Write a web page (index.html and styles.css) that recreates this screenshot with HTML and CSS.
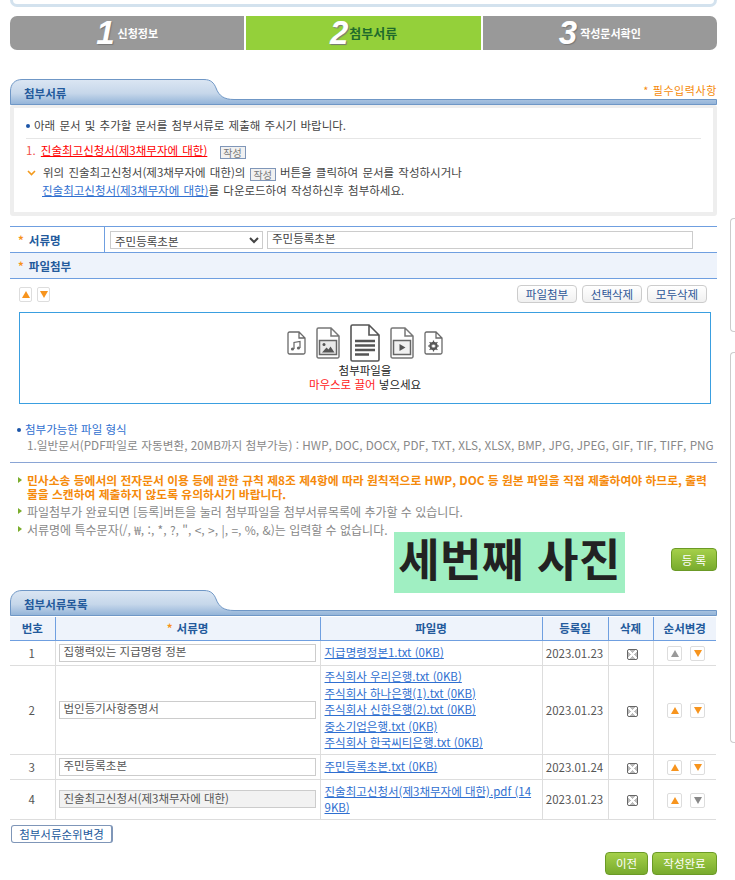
FILE: index.html
```html
<!DOCTYPE html>
<html lang="ko">
<head>
<meta charset="utf-8">
<title>첨부서류</title>
<link rel="stylesheet" href="styles.css">
</head>
<body>
<div class="side side-a"></div>
<div class="side side-b"></div>
<main class="page">
  <div class="top-card"></div>
  <ol class="steps">
    <li class="step"><span class="num">1</span><span class="lbl">신청정보</span></li>
    <li class="step on"><span class="num">2</span><span class="lbl">첨부서류</span></li>
    <li class="step"><span class="num">3</span><span class="lbl">작성문서확인</span></li>
  </ol>

  <div class="sec-head first">
    <svg class="tab" width="707" height="26" viewBox="0 0 707 26"><defs><linearGradient id="g1" x1="0" y1="0" x2="0" y2="1"><stop offset="0" stop-color="#dbe6f3"/><stop offset=".55" stop-color="#c6d7ea"/><stop offset="1" stop-color="#92b3d8"/></linearGradient></defs><path d="M.5 25.5V12C.5 5 5 .5 12 .5H194C201 .5 204 4 206 9C209 17 214 20.500 224 20.500H706.500V25.500Z" fill="url(#g1)" stroke="#6f97c6"/></svg>
    <h2 class="sec-title">첨부서류</h2>
    <span class="req">* 필수입력사항</span>
  </div>
  <section class="guide">
    <p class="g-intro"><i class="dot"></i>아래 문서 및 추가할 문서를 첨부서류로 제출해 주시기 바랍니다.</p>
    <p class="g-doc">1. <a class="red" href="#">진술최고신청서(제3채무자에 대한)</a> <span class="mini g-mini1">작성</span></p>
    <p class="g-how"><svg class="chev" width="9" height="6" viewBox="0 0 9 6"><path d="M1 1l3.500 3.500L8 1" fill="none" stroke="#f39a1d" stroke-width="1.600"/></svg>위의 진술최고신청서(제3채무자에 대한)의 <span class="mini">작성</span> 버튼을 클릭하여 문서를 작성하시거나</p>
    <p class="g-how2"><a href="#">진술최고신청서(제3채무자에 대한)</a>를 다운로드하여 작성하신후 첨부하세요.</p>
  </section>

  <div class="f-row f-name">
    <div class="f-label"><b class="star">*</b>서류명</div>
    <div class="f-val">
      <select class="sel"><option>주민등록초본</option></select>
      <input class="inp" value="주민등록초본">
    </div>
  </div>
  <div class="f-row f-file"><div class="f-label"><b class="star">*</b>파일첨부</div></div>

  <div class="tools">
    <div class="arrows">
      <span class="arr"><i class="up"></i></span>
      <span class="arr"><i class="down"></i></span>
    </div>
    <div class="t-btns">
      <button class="tbtn">파일첨부</button>
      <button class="tbtn">선택삭제</button>
      <button class="tbtn">모두삭제</button>
    </div>
  </div>

  <div class="drop">
    <div class="icons">
      <svg width="19" height="24" viewBox="0 0 19 24"><path d="M1 2.500A1.500 1.500 0 0 1 2.500 1H12L18 7V21.500A1.500 1.500 0 0 1 16.500 23H2.500A1.500 1.500 0 0 1 1 21.500Z M12 1V7H18" fill="#fff" stroke="#6a6a6a" stroke-width="1.300"/><path d="M7 18V11.500L13 10.500V17" fill="none" stroke="#666" stroke-width="1.200"/><circle cx="5.500" cy="18" r="1.600" fill="#666"/><circle cx="11.500" cy="17" r="1.600" fill="#666"/></svg>
      <svg width="24" height="32" viewBox="0 0 24 32"><path d="M1 2.500A1.500 1.500 0 0 1 2.500 1H15L23 9V29.500A1.500 1.500 0 0 1 21.500 31H2.500A1.500 1.500 0 0 1 1 29.500Z M15 1V9H23" fill="#fff" stroke="#777" stroke-width="1.500"/><rect x="3.500" y="13.500" width="17" height="14" fill="#e9e9e9" stroke="#666" stroke-width="1.500"/><circle cx="8" cy="17.500" r="1.500" fill="#555"/><path d="M6 25.500l4.500-5 2 2 2-3 4 6Z" fill="#555"/></svg>
      <svg width="30" height="38" viewBox="0 0 30 38"><path d="M1 2.500A1.500 1.500 0 0 1 2.500 1H19L29 11V35.500A1.500 1.500 0 0 1 27.500 37H2.500A1.500 1.500 0 0 1 1 35.500Z M19 1V11H29" fill="#fff" stroke="#555" stroke-width="1.600"/><path d="M5 17H25M5 21.500H25M5 26H25M5 30.500H19" stroke="#555" stroke-width="2.400"/></svg>
      <svg width="24" height="32" viewBox="0 0 24 32"><path d="M1 2.500A1.500 1.500 0 0 1 2.500 1H15L23 9V29.500A1.500 1.500 0 0 1 21.500 31H2.500A1.500 1.500 0 0 1 1 29.500Z M15 1V9H23" fill="#fff" stroke="#777" stroke-width="1.500"/><rect x="3.500" y="13.500" width="17" height="14" fill="#f1f1f1" stroke="#666" stroke-width="1.500"/><path d="M9.500 17l6 3.500-6 3.500Z" fill="#555"/></svg>
      <svg width="19" height="24" viewBox="0 0 19 24"><path d="M1 2.500A1.500 1.500 0 0 1 2.500 1H12L18 7V21.500A1.500 1.500 0 0 1 16.500 23H2.500A1.500 1.500 0 0 1 1 21.500Z M12 1V7H18" fill="#fff" stroke="#6a6a6a" stroke-width="1.300"/><circle cx="9.500" cy="15" r="3.200" fill="none" stroke="#555" stroke-width="2"/><path d="M9.500 9.500v11M4 15h11M5.600 11.100l7.800 7.800M13.400 11.100l-7.800 7.800" stroke="#555" stroke-width="1.200"/><circle cx="9.500" cy="15" r="1.500" fill="#fff"/></svg>
    </div>
    <p class="d1">첨부파일을</p>
    <p class="d2"><span class="d-red">마우스로 끌어</span> 넣으세요</p>
  </div>

  <div class="formats">
    <p class="fmt-t"><i class="dot"></i>첨부가능한 파일 형식</p>
    <p class="fmt-l">1.일반문서(PDF파일로 자동변환, 20MB까지 첨부가능) : HWP, DOC, DOCX, PDF, TXT, XLS, XLSX, BMP, JPG, JPEG, GIF, TIF, TIFF, PNG</p>
  </div>

  <ul class="notes">
    <li class="warn">민사소송 등에서의 전자문서 이용 등에 관한 규칙 제8조 제4항에 따라 원칙적으로 HWP, DOC 등 원본 파일을 직접 제출하여야 하므로, 출력물을 스캔하여 제출하지 않도록 유의하시기 바랍니다.</li>
    <li>파일첨부가 완료되면 [등록]버튼을 눌러 첨부파일을 첨부서류목록에 추가할 수 있습니다.</li>
    <li>서류명에 특수문자(/, ₩, :, *, ?, ", &lt;, &gt;, |, =, %, &amp;)는 입력할 수 없습니다.</li>
  </ul>

  <div class="reg-row"><button class="gbtn reg">등 록</button></div>
  <div class="stamp">세번째 사진</div>

  <div class="sec-head second">
    <svg class="tab" width="707" height="26" viewBox="0 0 707 26"><defs><linearGradient id="g2" x1="0" y1="0" x2="0" y2="1"><stop offset="0" stop-color="#dbe6f3"/><stop offset=".55" stop-color="#c6d7ea"/><stop offset="1" stop-color="#92b3d8"/></linearGradient></defs><path d="M.5 25.500V12C.5 5 5 .5 12 .5H194C201 .5 204 4 206 9C209 17 214 20.500 224 20.500H706.500V25.500Z" fill="url(#g2)" stroke="#6f97c6"/></svg>
    <h2 class="sec-title">첨부서류목록</h2>
  </div>
  <table class="list">
    <colgroup><col class="c1"><col class="c2"><col class="c3"><col class="c4"><col class="c5"><col class="c6"></colgroup>
    <thead>
      <tr><th>번호</th><th><b class="star">*</b>서류명</th><th>파일명</th><th>등록일</th><th>삭제</th><th>순서변경</th></tr>
    </thead>
    <tbody>
      <tr class="r1"><td>1</td><td><input class="cell-inp" value="집행력있는 지급명령 정본"></td><td class="files"><a href="#">지급명령정본1.txt (0KB)</a></td><td>2023.01.23</td><td class="del-cell"><span class="del"></span></td><td class="ord"><span class="arr s off"><i class="up"></i></span><span class="arr s"><i class="down"></i></span></td></tr>
      <tr class="r2"><td>2</td><td><input class="cell-inp" value="법인등기사항증명서"></td><td class="files"><a href="#">주식회사 우리은행.txt (0KB)</a><a href="#">주식회사 하나은행(1).txt (0KB)</a><a href="#">주식회사 신한은행(2).txt (0KB)</a><a href="#">중소기업은행.txt (0KB)</a><a href="#">주식회사 한국씨티은행.txt (0KB)</a></td><td>2023.01.23</td><td class="del-cell"><span class="del"></span></td><td class="ord"><span class="arr s"><i class="up"></i></span><span class="arr s"><i class="down"></i></span></td></tr>
      <tr class="r3"><td>3</td><td><input class="cell-inp" value="주민등록초본"></td><td class="files"><a href="#">주민등록초본.txt (0KB)</a></td><td>2023.01.24</td><td class="del-cell"><span class="del"></span></td><td class="ord"><span class="arr s"><i class="up"></i></span><span class="arr s"><i class="down"></i></span></td></tr>
      <tr class="r4"><td>4</td><td><input class="cell-inp ro" value="진술최고신청서(제3채무자에 대한)" readonly></td><td class="files"><a href="#">진술최고신청서(제3채무자에 대한).pdf (149KB)</a></td><td>2023.01.23</td><td class="del-cell"><span class="del"></span></td><td class="ord"><span class="arr s"><i class="up"></i></span><span class="arr s off"><i class="down"></i></span></td></tr>
    </tbody>
  </table>
  <button class="order">첨부서류순위변경</button>
  <div class="foot"><button class="gbtn prev">이전</button><button class="gbtn done">작성완료</button></div>
</main>
</body>
</html>
```
FILE: styles.css
```css
* { box-sizing: border-box; }
html, body { margin: 0; padding: 0; height: 880px; overflow: hidden; background: #fff; }
body { position: relative; font: 11.500px/14px "Noto Sans CJK KR", "Noto Sans", sans-serif; color: #555; }
p, h2, ul, ol { margin: 0; padding: 0; list-style: none; }
a { color: #2f6fd0; text-decoration: underline; }
i { font-style: normal; }
button { font-family: inherit; cursor: pointer; }

.side { position: absolute; left: 730px; right: 0; background: #fff; border: 1px solid #ccc; border-right: 0; border-radius: 4px 0 0 4px; }
.side-a { top: 218px; height: 114px; }
.side-b { top: 352px; height: 391px; }

.page { width: 717px; padding-left: 10px; position: relative; }
.top-card { height: 7px; border: 3px solid #d3e2ee; border-top: 0; border-radius: 0 0 8px 8px; }

.steps { display: flex; gap: 2px; margin-top: 9px; height: 34px; }
.step { flex: 1; display: flex; justify-content: center; align-items: center; background: #999; color: #fff; font-weight: 700; font-size: 11px; gap: 3px; }
.step:first-child { border-radius: 7px 0 0 7px; }
.step:last-child { border-radius: 0 7px 7px 0; }
.step.on { background: #94d03a; color: #1f6b2c; font-size: 13px; gap: 1px; }
.num { font: italic 700 33px/34px "Liberation Sans", sans-serif; color: #fff; text-shadow: 1px 1px 1px #777; }

.sec-head { position: relative; height: 26px; }
.sec-head.first { margin-top: 29px; }
.sec-head.second { height: 27px; }
.tab { position: absolute; left: 0; top: 0; }
.sec-title { position: absolute; left: 14px; top: 6px; font-size: 11.500px; line-height: 16px; font-weight: 700; color: #235a9c; }
.req { position: absolute; right: 0; top: 4px; font-size: 11px; letter-spacing: .6px; color: #f58a0b; }

.guide { height: 111px; border: 4px solid #eee; border-top-width: 3px; border-radius: 3px; padding: 10px 12px 0; color: #444; word-spacing: 1px; }
.dot { display: inline-block; width: 4px; height: 4px; border-radius: 50%; background: #1c55a8; margin: 0 4px 1px 0; vertical-align: middle; }
.g-intro { box-sizing: content-box; height: 14px; padding-bottom: 6px; border-bottom: 1px solid #e6e6e6; }
.g-doc { margin-top: 4px; height: 16px; color: #f0504a; }
.red { color: #f00; margin-left: 1px; }
.mini { display: inline-block; width: 26px; height: 13px; line-height: 11px; text-align: center; border: 1px solid #7f96b8; background: #f1f1f1; color: #777; font-size: 10px; word-spacing: 0; vertical-align: -2px; }
.g-mini1 { margin-left: 8px; }
.g-how { margin-top: 5px; height: 19px; line-height: 16px; }
.chev { margin: 0 7px 2px 1px; vertical-align: middle; }
.g-how2 { padding-left: 16px; }

.f-row { border-bottom: 1px solid #6f9fe0; }
.f-name { margin-top: 10px; height: 27px; border-top: 1px solid #6f9fe0; display: flex; }
.f-file { height: 26px; background: #eef3fb; }
.f-label { display: flex; align-items: center; width: 95px; height: 100%; padding-left: 8px; font-weight: 700; font-size: 11.500px; color: #235a9c; }
.f-name .f-label { border-right: 1px solid #6f9fe0; }
.f-file .f-label { width: auto; }
.star { color: #f7941d; font-weight: 700; margin-right: 5px; }
.f-val { display: flex; align-items: center; gap: 4px; padding-left: 5px; }
.sel { width: 153px; height: 18px; padding: 0; border: 1px solid #ccc; background: #fff; color: #444; font: inherit; border-radius: 0; }
.inp { width: 426px; height: 18px; border: 1px solid #ccc; padding: 0 0 3px 4px; color: #444; font: inherit; }

.tools { display: flex; justify-content: space-between; align-items: flex-start; height: 33px; padding: 6px 10px 0 9px; }
.arrows { display: flex; gap: 5px; margin-top: 2px; }
.arr { display: inline-flex; align-items: center; justify-content: center; width: 13px; height: 15px; background: #fff; border: 1px solid #ddd; border-radius: 2px; }
.arr i { width: 0; height: 0; border-left: 4px solid transparent; border-right: 4px solid transparent; }
.up { border-bottom: 7px solid #f7941d; }
.down { border-top: 7px solid #f7941d; }
.t-btns { display: flex; gap: 5px; }
.tbtn { width: 60px; height: 18px; padding: 0; font-size: 11.500px; line-height: 15px; color: #2d5596; background: linear-gradient(#fff, #f0f0f0); border: 1px solid #ccc; border-radius: 4px; }

.drop { margin-left: 9px; width: 692px; height: 92px; border: 1px solid #3a9fe0; text-align: center; padding-top: 11px; color: #222; }
.icons { display: flex; justify-content: center; align-items: center; gap: 10px; height: 38px; }
.d1 { margin-top: 1px; line-height: 14px; }
.d2 { line-height: 14px; }
.d-red { color: #f22; }

.formats { margin-top: 17px; padding-left: 7px; height: 41px; }
.fmt-t { color: #2f6fd0; line-height: 16px; }
.fmt-l { padding-left: 10px; font-size: 11.700px; color: #888; white-space: nowrap; line-height: 16px; }
.notes { border-top: 1px solid #8aa5d5; padding-top: 10px; padding-left: 17px; color: #888; font-size: 12px; height: 87px; }
.notes li { position: relative; line-height: 15px; margin-bottom: 3px; }
.notes li::before { content: ""; position: absolute; left: -9px; top: 4px; border-left: 4px solid #7bad2c; border-top: 3px solid transparent; border-bottom: 3px solid transparent; }
.notes .warn { color: #f58a0b; font-weight: 700; font-size: 11.800px; line-height: 14px; margin-bottom: 3px; word-break: break-all; }

.reg-row { display: flex; justify-content: flex-end; height: 42px; margin-top: -1px; }
.gbtn { height: 23px; padding: 0; border: 1px solid #6b9a26; border-radius: 4px; background: linear-gradient(#a5d04a, #78ab2d); color: #fff; font-size: 11.500px; }
.reg { width: 46px; }
.stamp { position: absolute; left: 394px; top: 532px; width: 231px; height: 61px; background: #a0efc2; color: #222; font: 700 45px/51px "Noto Sans CJK KR", sans-serif; text-align: center; white-space: nowrap; letter-spacing: .5px; }

.list { width: 706px; border-collapse: collapse; table-layout: fixed; font-size: 11.500px; }
.c1 { width: 45px; } .c2 { width: 265px; } .c3 { width: 222px; } .c4 { width: 66px; } .c5 { width: 45px; } .c6 { width: 63px; }
.list th { height: 23px; padding: 0; background: #eef3fb; color: #235a9c; font-weight: 700; border-bottom: 1px solid #6f9fe0; border-right: 1px solid #6f9fe0; }
.list th:last-child { border-right: 0; }
.list th .star { margin-right: 4px; }
.list td { padding: 0 4px 0 3px; text-align: center; border-bottom: 1px solid #ddd; border-right: 1px solid #ddd; color: #555; font-size: 11.500px; line-height: 16px; }
.list .ord { border-right: 0; padding: 0 0 0 3px; }
.r1 td { height: 25px; } .r2 td { height: 89px; } .r3 td { height: 25px; } .r4 td { height: 40px; }
.list .files { text-align: left; line-height: 16.500px; word-break: break-all; padding: 0 8px 0 4px; }
.files a { display: block; }
.cell-inp { display: block; width: 100%; height: 18px; border: 1px solid #ccc; padding: 0 0 3px 4px; color: #555; font: inherit; }
.cell-inp.ro { background: #f2f2f2; }
.list .del-cell { padding: 0 0 0 4px; }
.del { display: inline-block; width: 11px; height: 11px; vertical-align: middle; background: linear-gradient(45deg, transparent 40%, #fff 40%, #fff 60%, transparent 60%), linear-gradient(-45deg, #bbb 40%, #fff 40%, #fff 60%, #bbb 60%); border: 1px solid #666; border-radius: 2px; }
.arr.s { width: 15px; height: 15px; vertical-align: middle; }
.arr.s + .arr.s { margin-left: 8px; }
.arr.off .up { border-bottom-color: #999; }
.arr.off .down { border-top-color: #888; }

.order { display: block; margin: 5px 0 0 1px; width: 102px; height: 18px; padding: 0; font-size: 11.500px; line-height: 14px; color: #235a9c; background: #fff; border: 1px solid #7f96b8; border-right-width: 2px; border-radius: 3px; }
.foot { display: flex; justify-content: flex-end; gap: 4px; margin-top: 9px; }
.prev { width: 43px; }
.done { width: 65px; }
```
